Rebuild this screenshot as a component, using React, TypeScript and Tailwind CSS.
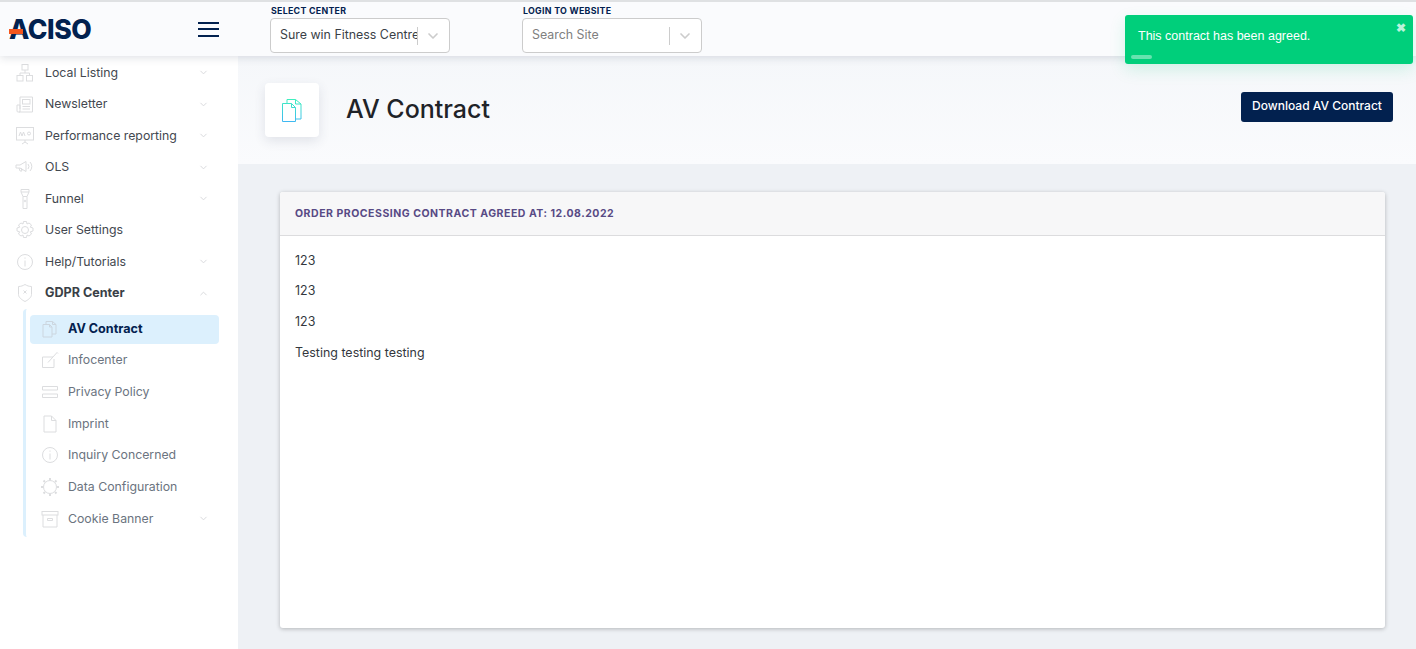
import React from 'react';
import { ChevronDown, ChevronUp } from 'lucide-react';

const ic = { width: 20, height: 20, viewBox: '0 0 20 20', fill: 'none', stroke: '#dcdddf', strokeWidth: 1 };

const SitemapIcon = () => (
  <svg {...ic}>
    <rect x="7" y="1.5" width="6" height="5.5" />
    <rect x="2" y="12.5" width="6" height="5.5" />
    <rect x="11.5" y="12.5" width="6" height="5.5" />
    <path d="M10 7v3M5 12.5V10h9.5v2.5" />
  </svg>
);
const NewsIcon = () => (
  <svg {...ic}>
    <path d="M5 3h12.5v15H4" />
    <path d="M5 3v12M2 11h3v7H3a1 1 0 0 1-1-1z" />
    <rect x="7.5" y="5.5" width="7.5" height="4.5" />
    <path d="M7.5 12.5H15M7.5 15H15" />
  </svg>
);
const BoardIcon = () => (
  <svg {...ic}>
    <rect x="1.5" y="1.5" width="17" height="12.5" />
    <path d="M4 10l1.500-4 1.500 4 1.500-4 1.500 4M10 16l-3 2M10 16l3 2M10 14v2" />
    <circle cx="14" cy="7.5" r="1.5" />
  </svg>
);
const MegaphoneIcon = () => (
  <svg {...ic}>
    <path d="M1 8h4l6-3.5v10L5 11H1zM4 11l1 3h2l-1-3" />
    <path d="M13 7a4 4 0 0 1 0 5M15 5a6.5 6.5 0 0 1 0 9" />
  </svg>
);
const TorchIcon = () => (
  <svg width="20" height="20" viewBox="0 0 20 20" fill="none" stroke="#dcdddf" strokeWidth="1">
    <path d="M6 0.500h8v2.500l-2 4.500v12H8v-12L6 3zM6 3h8M8 7.500h4" />
    <circle cx="10" cy="12" r="0.800" />
  </svg>
);
const GearIcon = () => (
  <svg {...ic}>
    <circle cx="10" cy="10" r="3.5" />
    <path d="M8.500 1.500h3l.5 2.500 2-1 2.500 2-1.200 2.200 2.700.8v3l-2.700.8 1.200 2.200-2.500 2-2-1-.5 2.500h-3l-.5-2.500-2 1-2.500-2 1.200-2.200-2.700-.8v-3l2.700-.8-1.200-2.200 2.500-2 2 1z" />
  </svg>
);
const InfoIcon = () => (
  <svg {...ic}>
    <circle cx="10" cy="10" r="7.500" />
    <path d="M10 8.500v6M10 5.500v1.200" />
  </svg>
);
const ShieldIcon = () => (
  <svg {...ic}>
    <path d="M3.500 3.500c2.500 0 4.500-.8 6.500-2 2 1.200 4 2 6.500 2v8c0 3-3.500 5.500-6.500 7-3-1.500-6.500-4-6.500-7z" />
    <path d="M8.500 7.500l3 3M11.500 7.500l-3 3" />
  </svg>
);
const DocsIcon = () => (
  <svg width="20" height="20" viewBox="0 0 20 20" fill="none" stroke="#ccd6df" strokeWidth="1">
    <path d="M3 5.500h6.500l2.500 2.500v10H3zM9.500 5.500V8H12" />
    <path d="M6 5.500V2.500h6.500L16 5.500V15h-4M12.500 2.500v3H16" />
  </svg>
);
const EditIcon = () => (
  <svg {...ic}>
    <path d="M13 7H2.500v10.500H14V9" />
    <path d="M8 12.500L17 2.500M17 2.500l1 1" />
  </svg>
);
const LinesIcon = () => (
  <svg {...ic}>
    <path d="M2.500 4.500h15M2.500 8h15M2.500 12h15M2.500 15.500h15" />
    <path d="M2.500 4.500V8M17.500 4.500V8M2.500 12v3.500M17.500 12v3.500" />
  </svg>
);
const FileIcon = () => (
  <svg {...ic}>
    <path d="M4 2h7.500L16 6.500V18H4zM11.500 2v4.500H16" />
  </svg>
);
const SunIcon = () => (
  <svg {...ic}>
    <circle cx="10" cy="10" r="6.500" />
    <path d="M10 1v2M10 17v2M1 10h2M17 10h2M3.500 3.500L5 5M15 15l1.500 1.500M3.500 16.500L5 15M15 5l1.500-1.500" strokeWidth="2" />
  </svg>
);
const BoxIcon = () => (
  <svg {...ic}>
    <rect x="2" y="2.500" width="16" height="3.500" />
    <path d="M3 6v12h14V6M7.500 9.500h5v2h-5z" />
  </svg>
);

type Item = { label: string; icon: React.ReactNode; arrow?: boolean };

const mainItems: Item[] = [
  { label: 'Local Listing', icon: <SitemapIcon />, arrow: true },
  { label: 'Newsletter', icon: <NewsIcon />, arrow: true },
  { label: 'Performance reporting', icon: <BoardIcon />, arrow: true },
  { label: 'OLS', icon: <MegaphoneIcon />, arrow: true },
  { label: 'Funnel', icon: <TorchIcon />, arrow: true },
  { label: 'User Settings', icon: <GearIcon /> },
  { label: 'Help/Tutorials', icon: <InfoIcon />, arrow: true },
];

const subItems: Item[] = [
  { label: 'Infocenter', icon: <EditIcon /> },
  { label: 'Privacy Policy', icon: <LinesIcon /> },
  { label: 'Imprint', icon: <FileIcon /> },
  { label: 'Inquiry Concerned', icon: <InfoIcon /> },
  { label: 'Data Configuration', icon: <SunIcon /> },
  { label: 'Cookie Banner', icon: <BoxIcon />, arrow: true },
];

function Sidebar() {
  return (
    <aside className="w-[238px] shrink-0 bg-white pl-[15px] pr-[29px] h-[593px] pt-[1.2px]">
      {mainItems.map((item) => (
        <div key={item.label} className="flex items-center h-[31.5px] text-[12.3px] text-[#43484f]">
          <span className="w-[20px] flex justify-center mr-[10px]">{item.icon}</span>
          <span className="flex-1">{item.label}</span>
          {item.arrow && <ChevronDown size={11} color="#d5d7da" />}
        </div>
      ))}
      <div className="flex items-center h-[31.5px] text-[12.6px] font-bold text-[#3a3f47]">
        <span className="w-[20px] flex justify-center mr-[10px]"><ShieldIcon /></span>
        <span className="flex-1">GDPR Center</span>
        <ChevronUp size={11} color="#d5d7da" />
      </div>
      <div className="ml-[8px] pt-[5.4px] border-l-[3px] border-[#dcf0fd] rounded-sm h-[228px] w-[196px]">
        <div className="ml-[4px] h-[29px] mb-[1px] rounded bg-[#dcf0fd] flex items-center pl-[10px] text-[12.6px] font-bold text-[#02214f]">
          <span className="w-[20px] flex justify-center mr-[8px]"><DocsIcon /></span>
          AV Contract
        </div>
        {subItems.map((item) => (
          <div key={item.label} className="ml-[4px] h-[31.7px] flex items-center pl-[10px] pr-[10px] text-[12.3px] text-[#6b7480]">
            <span className="w-[20px] flex justify-center mr-[8px]">{item.icon}</span>
            <span className="flex-1">{item.label}</span>
            {item.arrow && <ChevronDown size={11} color="#d5d7da" />}
          </div>
        ))}
      </div>
    </aside>
  );
}

function SelectBox({ label, value, placeholder }: { label: string; value?: string; placeholder?: string }) {
  return (
    <div className="w-[180px] mt-[3px]">
      <div className="pl-[1px] text-[8.8px] leading-[11px] font-bold tracking-[0.3px] text-[#02214f] mb-[2px]">{label}</div>
      <div className="h-[35px] border border-[#ccc] rounded bg-white flex items-center">
        <span className={`pl-[9px] text-[12.4px] w-[146px] overflow-hidden whitespace-nowrap ${value ? 'text-[#3a3f47]' : 'text-[#808080]'}`}>
          {value ?? placeholder}
        </span>
        <span className="h-[18px] w-px bg-[#ccc]" />
        <span className="flex-1 flex justify-center pr-[2px]">
          <ChevronDown size={16} color="#ccc" strokeWidth={2.5} />
        </span>
      </div>
    </div>
  );
}

export default function App() {
  return (
    <div className="relative h-[649px] w-[1416px] overflow-hidden bg-[#eef1f5] text-[#3a3f47]" style={{ fontFamily: 'Inter, sans-serif' }}>
      <header className="relative z-10 h-[56px] bg-[#fafbfd] border-t-2 border-[#dfe1e3] shadow-[0_2px_8px_rgba(50,60,90,0.15)] flex">
        <div className="w-[238px] shrink-0 flex items-center justify-between pl-[9px] pr-[19px]">
          <div className="relative text-[26.5px] leading-none font-extrabold tracking-[-0.4px] text-[#02214f]">
            ACISO
            <span className="absolute left-0 top-[13px] w-[14px] h-[5px] bg-[#f4561d] -skew-x-[20px]" />
          </div>
          <div className="flex flex-col gap-[4.5px]">
            <span className="block w-[21px] h-[2px] bg-[#02214f]" />
            <span className="block w-[21px] h-[2px] bg-[#02214f]" />
            <span className="block w-[21px] h-[2px] bg-[#02214f]" />
          </div>
        </div>
        <div className="flex pl-[32px] gap-[72px]">
          <SelectBox label="SELECT CENTER" value="Sure win Fitness Centre" />
          <SelectBox label="LOGIN TO WEBSITE" placeholder="Search Site" />
        </div>
      </header>
      <div className="flex">
        <Sidebar />
        <main className="flex-1 min-w-0">
          <div className="h-[108px] bg-gradient-to-b from-[#f5f7fa] to-[#fafbfd] flex items-start pl-[27px] pr-[23px] pt-[27px]">
            <div className="w-[54px] h-[54px] bg-white rounded shadow-[0_4px_12px_rgba(50,60,90,0.12)] flex items-center justify-center">
              <svg width="20" height="23" viewBox="0 0 20 23" fill="none" strokeWidth="1">
                <defs>
                  <linearGradient id="docGrad" gradientUnits="userSpaceOnUse" x1="10" y1="0" x2="8" y2="23">
                    <stop offset="0" stopColor="#3ff0bd" />
                    <stop offset="1" stopColor="#3fb8f2" />
                  </linearGradient>
                </defs>
                <path d="M5 4.500V0.500h8.500L19 5v15h-5M13.500 0.500V5H19" stroke="url(#docGrad)" />
                <path d="M0.500 4.500h9l4 4v14h-13zM9.500 4.500v4h4" stroke="url(#docGrad)" />
              </svg>
            </div>
            <h1 className="ml-[27px] mt-[8px] text-[25px] leading-[36px] font-medium text-[#1f2328]">AV Contract</h1>
            <button className="ml-auto mt-[9px] h-[30px] w-[152px] pb-[2px] rounded-[3px] bg-[#02214f] text-white text-[12px] font-medium">
              Download AV Contract
            </button>
          </div>
          <div className="pt-[28px] pl-[42px] pr-[31px]">
            <div className="h-[436px] bg-white rounded-[3px] shadow-[0_1px_4px_rgba(0,0,0,0.25)]">
              <div className="h-[44px] bg-[#f7f7f8] border-b border-[#dcdcde] rounded-t-[3px] flex items-center pl-[15px] text-[10.5px] font-bold tracking-[0.52px] text-[#584a85]">
                ORDER PROCESSING CONTRACT AGREED AT: 12.08.2022
              </div>
              <div className="pt-[9px] pl-[15px] text-[12.45px] text-[#33373d]">
                <p className="h-[31px] leading-[31px]">123</p>
                <p className="h-[30px] leading-[30px]">123</p>
                <p className="h-[31px] leading-[31px]">123</p>
                <p className="h-[31px] leading-[31px]">Testing testing testing</p>
              </div>
            </div>
          </div>
        </main>
      </div>
      <div className="absolute z-20 left-[1125px] top-[15px] w-[288px] h-[49px] rounded-[3px] bg-[#00cf7b] shadow-[0_6px_16px_rgba(0,207,123,0.15)] text-white">
        <div className="pl-[13px] pt-[13px] text-[12.5px] leading-[16px]" style={{ fontFamily: '"Liberation Sans", sans-serif' }}>This contract has been agreed.</div>
        <span className="absolute right-[7px] top-[6px] text-[12px] leading-[14px] font-bold text-[#bdf3dc]">✖</span>
        <span className="absolute left-[6px] bottom-[5px] w-[21px] h-[4px] rounded-full bg-[#66e3af]" />
      </div>
    </div>
  );
}
